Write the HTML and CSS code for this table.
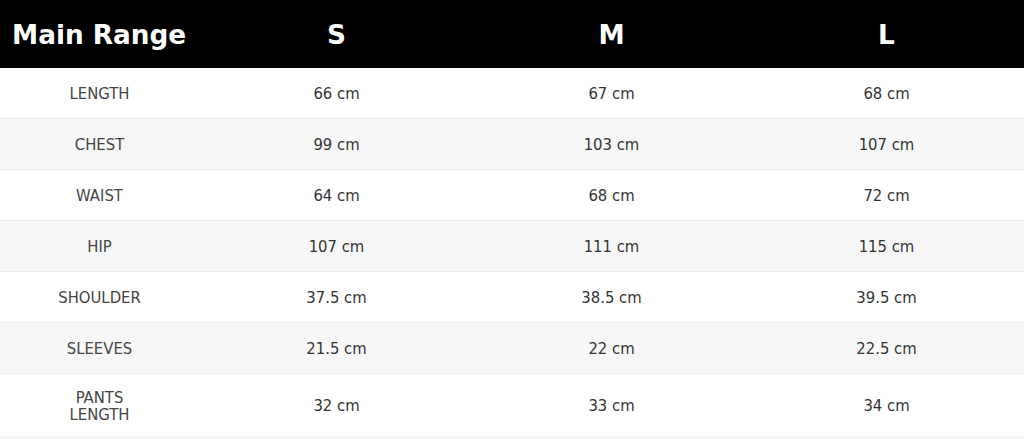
FILE: index.html
```html
<!DOCTYPE html>
<html>
<head>
<meta charset="utf-8">
<link rel="stylesheet" href="styles.css">
</head>
<body>
<table class="size-table">
  <colgroup>
    <col class="col-label">
    <col class="col-size">
    <col class="col-size">
    <col class="col-size">
  </colgroup>
  <thead>
    <tr>
      <th class="range">Main Range</th>
      <th>S</th>
      <th>M</th>
      <th>L</th>
    </tr>
  </thead>
  <tbody>
    <tr><td class="label">LENGTH</td><td>66 cm</td><td>67 cm</td><td>68 cm</td></tr>
    <tr><td class="label">CHEST</td><td>99 cm</td><td>103 cm</td><td>107 cm</td></tr>
    <tr><td class="label">WAIST</td><td>64 cm</td><td>68 cm</td><td>72 cm</td></tr>
    <tr><td class="label">HIP</td><td>107 cm</td><td>111 cm</td><td>115 cm</td></tr>
    <tr><td class="label">SHOULDER</td><td>37.5 cm</td><td>38.5 cm</td><td>39.5 cm</td></tr>
    <tr><td class="label">SLEEVES</td><td>21.5 cm</td><td>22 cm</td><td>22.5 cm</td></tr>
    <tr class="tall"><td class="label">PANTS<br>LENGTH</td><td>32 cm</td><td>33 cm</td><td>34 cm</td></tr>
  </tbody>
</table>
</body>
</html>
```
FILE: styles.css
```css
html, body {
  margin: 0;
  padding: 0;
  background: #fff;
}
.size-table {
  width: 1024px;
  border-collapse: collapse;
  table-layout: fixed;
  font-family: "DejaVu Sans", sans-serif;
}
.col-label { width: 199px; }
.col-size { width: 275px; }
.size-table thead th {
  background: #000;
  color: #fff;
  font-weight: bold;
  font-size: 26.3px;
  height: 67px;
  padding: 1px 0 0 0;
  text-align: center;
}
.size-table thead th.range {
  text-align: left;
  padding-left: 12px;
}
.size-table tbody td {
  height: 50px;
  padding: 0;
  text-align: center;
  font-family: "DejaVu Sans Condensed", "DejaVu Sans", sans-serif;
  font-size: 16.5px;
  line-height: 17px;
  color: #333;
  border-bottom: 1px solid #ececec;
}
.size-table tbody td.label {
  color: #444;
}
.size-table tbody tr:nth-child(even) td {
  background: #f7f7f7;
}
.size-table tbody tr.tall td {
  height: 63px;
}
```
